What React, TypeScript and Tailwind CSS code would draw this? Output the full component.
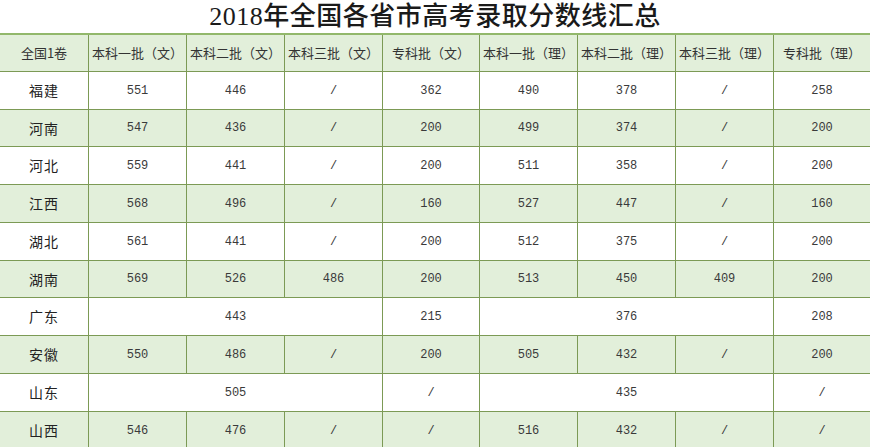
const columns = ["全国1卷", "本科一批（文）", "本科二批（文）", "本科三批（文）", "专科批（文）", "本科一批（理）", "本科二批（理）", "本科三批（理）", "专科批（理）"];

type Cell = { v: string; span?: number };

const rows: { name: string; cells: Cell[]; h: string }[] = [
  { name: "福建", h: "h-[38px]", cells: ["551", "446", "/", "362", "490", "378", "/", "258"].map((v) => ({ v })) },
  { name: "河南", h: "h-[37px]", cells: ["547", "436", "/", "200", "499", "374", "/", "200"].map((v) => ({ v })) },
  { name: "河北", h: "h-[38px]", cells: ["559", "441", "/", "200", "511", "358", "/", "200"].map((v) => ({ v })) },
  { name: "江西", h: "h-[38px]", cells: ["568", "496", "/", "160", "527", "447", "/", "160"].map((v) => ({ v })) },
  { name: "湖北", h: "h-[38px]", cells: ["561", "441", "/", "200", "512", "375", "/", "200"].map((v) => ({ v })) },
  { name: "湖南", h: "h-[37px]", cells: ["569", "526", "486", "200", "513", "450", "409", "200"].map((v) => ({ v })) },
  { name: "广东", h: "h-[38px]", cells: [{ v: "443", span: 3 }, { v: "215" }, { v: "376", span: 3 }, { v: "208" }] },
  { name: "安徽", h: "h-[38px]", cells: ["550", "486", "/", "200", "505", "432", "/", "200"].map((v) => ({ v })) },
  { name: "山东", h: "h-[38px]", cells: [{ v: "505", span: 3 }, { v: "/" }, { v: "435", span: 3 }, { v: "/" }] },
  { name: "山西", h: "h-[38px]", cells: ["546", "476", "/", "/", "516", "432", "/", "/"].map((v) => ({ v })) },
];

const grid = "grid grid-cols-[88px_98px_98px_98px_97px_98px_98px_98px_97px]";

export default function App() {
  return (
    <div className="w-[870px] h-[447px] overflow-hidden bg-white text-[#333]">
      <div className="h-[33px] flex items-center justify-center text-[26px] leading-none font-medium text-[#1a1a1a] tracking-[0.5px] font-['Liberation_Serif','Noto_Sans_CJK_SC',serif]">
        2018年全国各省市高考录取分数线汇总
      </div>

      <div className={`${grid} h-[39px] border-t-2 border-b border-t-[#92b86b] border-b-[#7c9a55] bg-[#e2efda]`}>
        {columns.map((c, i) => (
          <div
            key={c}
            className={`flex items-center justify-center text-[13px] text-[#333] font-['Noto_Sans_CJK_SC','Noto_Sans',sans-serif] ${
              i > 0 ? "border-l border-[#7c9a55]" : ""
            }`}
          >
            {c}
          </div>
        ))}
      </div>

      {rows.map((r, ri) => (
        <div
          key={r.name}
          className={`${grid} ${r.h} border-b border-[#7c9a55] ${ri % 2 === 1 ? "bg-[#e2efda]" : "bg-white"}`}
        >
          <div className="flex items-center justify-center text-[14px] tracking-[1px] text-[#222] font-['Noto_Sans_CJK_SC','Noto_Sans',sans-serif]">
            {r.name}
          </div>
          {r.cells.map((c, ci) => (
            <div
              key={ci}
              className={`flex items-center justify-center border-l border-[#7c9a55] text-[12px] text-[#3a3a3a] font-['Liberation_Mono','Noto_Sans_CJK_SC',monospace] ${
                c.span === 3 ? "col-span-3" : ""
              }`}
            >
              {c.v}
            </div>
          ))}
        </div>
      ))}
    </div>
  );
}
